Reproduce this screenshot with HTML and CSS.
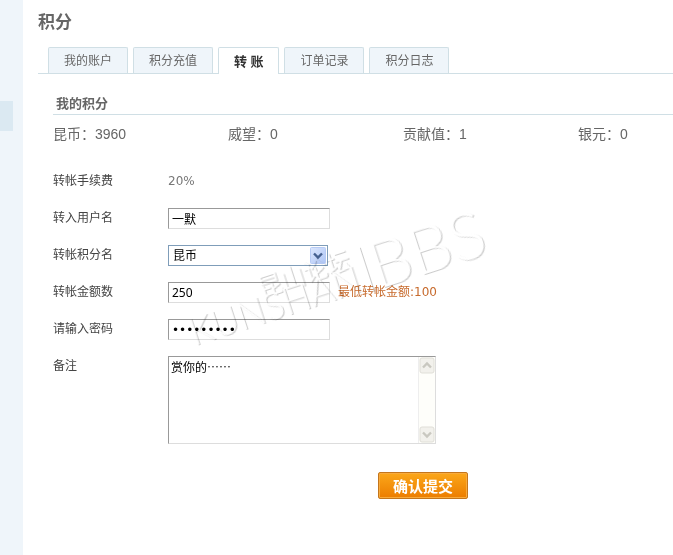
FILE: index.html
```html
<!DOCTYPE html>
<html lang="zh-CN">
<head>
<meta charset="utf-8">
<title>积分</title>
<link rel="stylesheet" href="styles.css">
</head>
<body>
<div class="layout">
  <aside class="sidebar"><div class="sidebar-current"></div></aside>
  <main class="main">
    <h1 class="title">积分</h1>
    <nav class="tabs">
      <a class="tab" href="#account">我的账户</a>
      <a class="tab" href="#recharge">积分充值</a>
      <a class="tab tab-active" href="#transfer">转 账</a>
      <a class="tab" href="#orders">订单记录</a>
      <a class="tab" href="#log">积分日志</a>
    </nav>
    <section class="panel">
      <h2 class="subtitle">我的积分</h2>
      <div class="stats">
        <span>昆币：3960</span>
        <span>威望：0</span>
        <span>贡献值：1</span>
        <span>银元：0</span>
      </div>
      <form class="form">
        <div class="row">
          <span class="label">转帐手续费</span>
          <span class="fee">20%</span>
        </div>
        <div class="row">
          <label class="label" for="user">转入用户名</label>
          <input class="field" id="user" type="text" value="一默">
        </div>
        <div class="row">
          <label class="label" for="kind">转帐积分名</label>
          <div class="select-box">
            <select class="select" id="kind"><option>昆币</option></select>
            <svg class="select-arrow" viewBox="0 0 16 17">
              <defs><linearGradient id="blue" x1="0" y1="0" x2="1" y2="1"><stop offset="0" stop-color="#dce7fd"/><stop offset="1" stop-color="#aec5f5"/></linearGradient></defs>
              <rect x=".5" y=".5" width="15" height="16" rx="1" fill="url(#blue)" stroke="#b7cbf5"/>
              <path d="M4 6.500l4 4 4-4" fill="none" stroke="#45608f" stroke-width="2.400"/>
            </svg>
          </div>
        </div>
        <div class="row">
          <label class="label" for="amount">转帐金额数</label>
          <input class="field" id="amount" type="text" value="250">
          <span class="hint">最低转帐金额<span class="hint-number">:100</span></span>
        </div>
        <div class="row">
          <label class="label" for="password">请输入密码</label>
          <input class="field password" id="password" type="password" value="123456789">
        </div>
        <div class="row">
          <label class="label" for="note">备注</label>
          <div class="note-box">
            <textarea class="note" id="note">赏你的⋯⋯</textarea>
            <div class="scroll" aria-hidden="true">
              <svg class="scroll-button" viewBox="0 0 16 17">
                <rect x="1" y="1" width="14" height="15" rx="2" fill="#f2f1ec" stroke="#e0dfd8"/>
                <path d="M4 10.500l4-4 4 4" fill="none" stroke="#c9c8c0" stroke-width="2.400"/>
              </svg>
              <svg class="scroll-button" viewBox="0 0 16 17">
                <rect x="1" y="1" width="14" height="15" rx="2" fill="#f2f1ec" stroke="#e0dfd8"/>
                <path d="M4 6.500l4 4 4-4" fill="none" stroke="#c9c8c0" stroke-width="2.400"/>
              </svg>
            </div>
          </div>
        </div>
        <button class="submit" type="button">确认提交</button>
      </form>
    </section>
  </main>
</div>
<svg class="watermark" viewBox="0 0 360 220" aria-hidden="true">
  <g class="mark" transform="translate(12 191) rotate(-18)">
    <text class="mark-latin" x="0" y="0">KUNSHAN</text>
    <text class="mark-cjk" x="79" y="-26">昆山论坛</text>
    <path class="mark-line" d="M187 3V-43"/>
    <text class="mark-bbs" x="192" y="3">BBS</text>
  </g>
</svg>
</body>
</html>
```
FILE: styles.css
```css
* { box-sizing: border-box; }

body {
  margin: 0;
  background: #fff;
  color: #666;
  font: 12px/20px "Noto Sans", "Noto Sans CJK SC", sans-serif;
}

.layout { display: flex; min-height: 100vh; }

.sidebar { flex: none; width: 23px; padding-top: 101px; background: #eff5fa; }
.sidebar-current { width: 13px; height: 30px; background: #dbe9f2; }

.main { flex: 1; min-width: 0; padding: 10px 0 0 15px; }

.title { margin: 0; font-size: 17px; line-height: 24px; color: #666; }

.tabs {
  display: flex;
  gap: 5px;
  margin-top: 13px;
  padding-left: 10px;
  border-bottom: 1px solid #d0dfe5;
}
.tab {
  height: 26px;
  padding: 0 15px;
  border: 1px solid #d0dfe5;
  border-bottom: 0;
  border-radius: 2px 2px 0 0;
  background: #eff5fa;
  color: #666;
  line-height: 26px;
  text-decoration: none;
}
.tab-active {
  height: 27px;
  margin-bottom: -1px;
  background: #fff;
  color: #333;
  font-size: 13px;
  font-weight: bold;
}

.panel { padding: 18px 0 20px 15px; }
.subtitle {
  margin: 0;
  padding-left: 3px;
  border-bottom: 1px solid #d0dfe5;
  font-size: 13px;
  line-height: 22px;
}

.stats {
  display: grid;
  grid-template-columns: 1fr 1fr 1fr 95px;
  margin-top: 8px;
  font: 14px/22px "Liberation Sans", "Noto Sans CJK SC", sans-serif;
}

.form { display: flex; flex-direction: column; gap: 16px; margin-top: 26px; }
.row { display: flex; align-items: flex-start; min-height: 21px; }
.label { flex: none; width: 115px; color: #444; }
.fee { font-family: "DejaVu Sans", sans-serif; line-height: 20px; color: #777; }

.field {
  width: 162px;
  height: 21px;
  padding: 0 3px;
  border: 1px solid;
  border-color: #999 #ddd #ddd #999;
  background: #fff;
  color: #000;
  font: inherit;
}
.password { font-family: "DejaVu Sans", sans-serif; }

.select-box { position: relative; width: 160px; height: 21px; }
.select {
  appearance: none;
  width: 100%;
  height: 21px;
  padding: 0 20px 0 4px;
  border: 1px solid #7f9db9;
  border-radius: 0;
  background: #fff;
  color: #000;
  font: inherit;
}
.select-arrow {
  position: absolute;
  top: 2px;
  right: 2px;
  width: 16px;
  height: 17px;
  pointer-events: none;
}

.hint { padding-left: 8px; color: #c76a2c; }
.hint-number { font-family: "DejaVu Sans", sans-serif; }

.note-box {
  display: flex;
  width: 268px;
  height: 88px;
  border: 1px solid;
  border-color: #999 #ddd #ddd #999;
}
.note {
  flex: 1;
  min-width: 0;
  padding: 1px 2px;
  border: 0;
  resize: none;
  overflow: hidden;
  color: #000;
  font: inherit;
}
.scroll {
  display: flex;
  flex-direction: column;
  justify-content: space-between;
  border-left: 1px solid #eee;
  background: #fefefa;
}
.scroll-button { width: 16px; height: 17px; }

.submit {
  width: 90px;
  height: 27px;
  margin: 12px 0 0 325px;
  padding: 0;
  border: 1px solid #c4761c;
  border-radius: 2px;
  background: linear-gradient(#fba71a, #ec7d00);
  box-shadow: inset 0 0 0 1px #f9ab3c;
  color: #fff;
  font: bold 15px/23px "Noto Sans CJK SC", sans-serif;
}

/* Multiply keeps the white faces see-through, so only the shaded edges tint the form. */
.watermark {
  position: absolute;
  top: 155px;
  left: 182px;
  width: 360px;
  height: 220px;
  overflow: visible;
  pointer-events: none;
  mix-blend-mode: multiply;
}
.mark { fill: #fff; filter: drop-shadow(1px 1px 0 #ccc); }
.mark-latin { font: 300 37px Lato, sans-serif; }
.mark-cjk { font: 24px "Noto Sans CJK SC", sans-serif; }
.mark-bbs { font: 300 66px Lato, sans-serif; }
.mark-line { stroke: #fff; stroke-width: 2; }
```
